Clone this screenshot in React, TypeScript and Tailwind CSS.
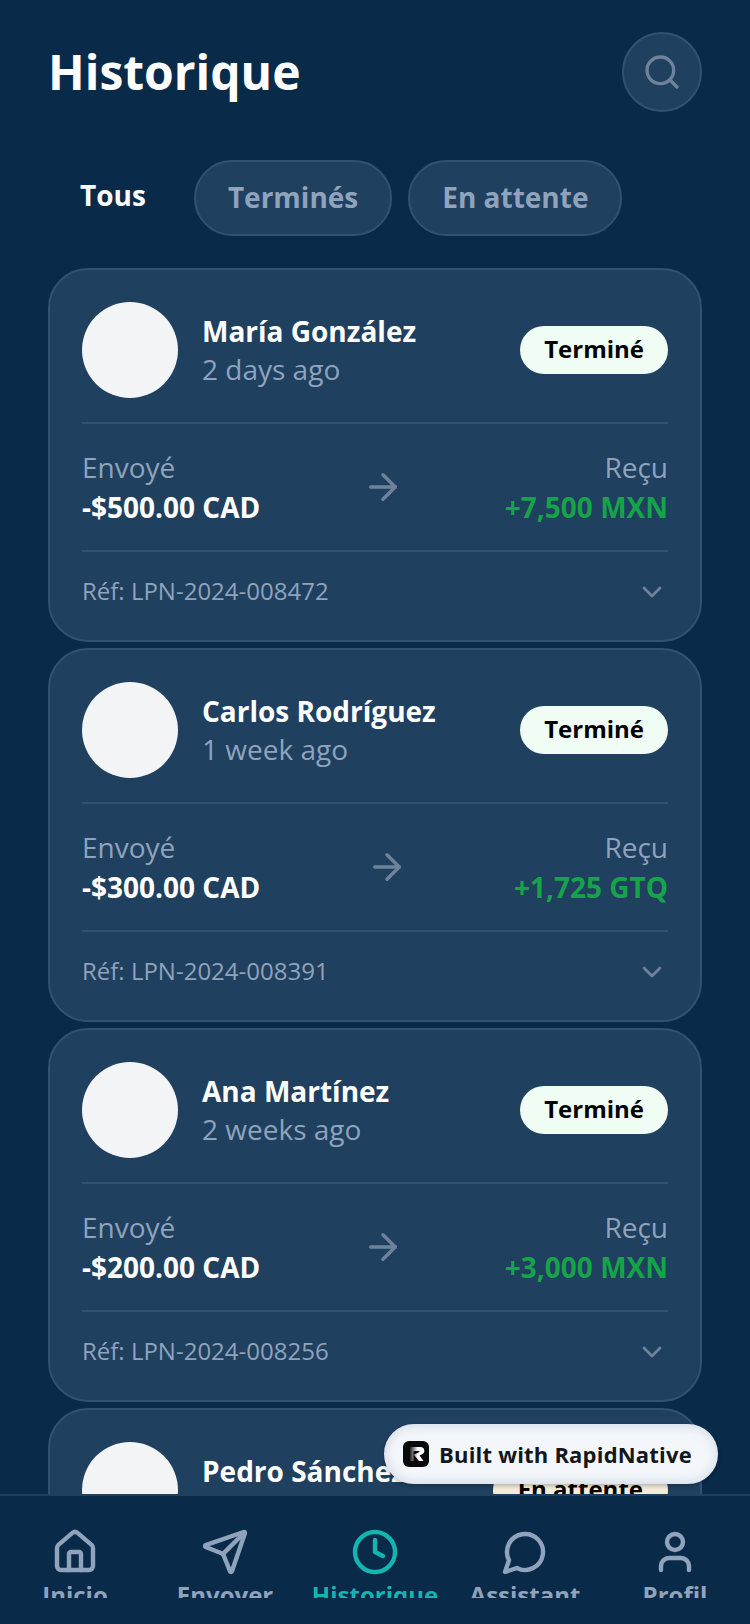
import { ArrowRight, ChevronDown, Clock, House, Search, Send, User } from 'lucide-react';

const transfers = [
  { name: 'María González', when: '2 days ago', sent: '-$500.00 CAD', got: '+7,500 MXN', ref: 'Réf: LPN-2024-008472', pending: false },
  { name: 'Carlos Rodríguez', when: '1 week ago', sent: '-$300.00 CAD', got: '+1,725 GTQ', ref: 'Réf: LPN-2024-008391', pending: false },
  { name: 'Ana Martínez', when: '2 weeks ago', sent: '-$200.00 CAD', got: '+3,000 MXN', ref: 'Réf: LPN-2024-008256', pending: false },
  { name: 'Pedro Sánchez', when: '3 weeks ago', sent: '-$150.00 CAD', got: '+2,250 MXN', ref: 'Réf: LPN-2024-008101', pending: true },
];

// lucide's current message-circle has a softer tail than the reference
const ChatIcon = ({ size, strokeWidth, className }: { size: number; strokeWidth: number; className: string }) => (
  <svg width={size} height={size} viewBox="0 0 24 24" fill="none" stroke="currentColor" strokeWidth={strokeWidth} strokeLinecap="round" strokeLinejoin="round" className={className}>
    <path d="M7.9 20A9 9 0 1 0 4 16.1L2 22Z" />
  </svg>
);

const navItems = [
  { label: 'Inicio', icon: House },
  { label: 'Envoyer', icon: Send },
  { label: 'Historique', icon: Clock, active: true },
  { label: 'Assistant', icon: ChatIcon },
  { label: 'Profil', icon: User },
];

const TransferCard = ({ item }: { item: (typeof transfers)[number] }) => (
  <div className="shrink-0 rounded-[40px] border-2 border-[#345270] bg-[#1f405f] px-8 pt-8 pb-[33px]">
    {/* Header */}
    <div className="flex items-center justify-between pb-6">
      <div className="flex items-center gap-6">
        <div className="h-24 w-24 rounded-full bg-[#f3f4f6]" />
        <div>
          <div className="text-[28px] leading-[38px] font-bold text-white">{item.name}</div>
          <div className="text-[28px] leading-[38px] text-[#8fa3bd]">{item.when}</div>
        </div>
      </div>
      <div className={`rounded-full pt-[6px] pb-[8px] text-[24px] leading-[34px] font-bold text-black ${item.pending ? 'bg-[#f3eedb] px-[25px]' : 'bg-[#f0fdf4] px-6'}`}>
        {item.pending ? 'En attente' : 'Terminé'}
      </div>
    </div>

    {/* Amounts */}
    <div className="flex items-center justify-between border-y-2 border-[#345270] py-6">
      <div>
        <div className="text-[28px] leading-[38px] text-[#8fa3bd]">Envoyé</div>
        <div className="mt-[2px] text-[28px] leading-[38px] font-bold text-white">{item.sent}</div>
      </div>
      <ArrowRight size={42} strokeWidth={2} className="text-[#6f829c]" />
      <div className="text-right">
        <div className="text-[28px] leading-[38px] text-[#8fa3bd]">Reçu</div>
        <div className="mt-[2px] text-[28px] leading-[38px] font-bold text-[#16a34a]">{item.got}</div>
      </div>
    </div>

    {/* Reference */}
    <div className="flex items-center justify-between pt-[23px]">
      <div className="text-[24px] leading-[32px] text-[#8fa3bd]">{item.ref}</div>
      <ChevronDown size={32} strokeWidth={2} className="translate-y-px text-[#6f829c]" />
    </div>
  </div>
);

export default function App() {
  return (
    <div className="relative flex h-[1624px] w-[750px] flex-col overflow-hidden bg-[#0a2a4a] font-['Open_Sans',sans-serif]">
      <div className="flex min-h-0 flex-1 flex-col overflow-hidden px-12">
        {/* Header */}
        <div className="flex items-center justify-between pt-8 pb-12">
          <h1 className="text-[48px] leading-[80px] font-bold text-white">Historique</h1>
          <div className="flex h-20 w-20 items-center justify-center rounded-full border-2 border-[#345270] bg-[#1f405f]">
            <Search size={40} strokeWidth={2} className="text-[#6f829c]" />
          </div>
        </div>

        {/* Filters */}
        <div className="flex items-center gap-4 pb-8">
          <div className="-mt-[6px] px-8 text-[28px] leading-[38px] font-bold text-white">Tous</div>
          <div className="rounded-full border-2 border-[#345270] bg-[#1f405f] px-8 pt-[15px] pb-[17px] text-[28px] leading-[40px] font-bold text-[#8fa3bd]">Terminés</div>
          <div className="rounded-full border-2 border-[#345270] bg-[#1f405f] px-8 pt-[15px] pb-[17px] text-[28px] leading-[40px] font-bold text-[#8fa3bd]">En attente</div>
        </div>

        {/* Transfers */}
        <div className="flex flex-col gap-[6px]">
          {transfers.map((item) => (
            <TransferCard key={item.ref} item={item} />
          ))}
        </div>
      </div>

      {/* Bottom nav */}
      <nav className="flex h-[130px] shrink-0 border-t-2 border-[#1f405f] bg-[#0a2a4a] pt-[32px]">
        {navItems.map(({ label, icon: Icon, active }) => (
          <div key={label} className="flex w-[150px] flex-col items-center">
            <Icon size={48} strokeWidth={2.2} className={active ? 'text-[#12b5b0]' : 'text-[#8fa3bd]'} />
            <div className={`mt-[3px] h-[19px] overflow-hidden text-[24px] leading-[32px] font-bold ${active ? 'text-[#12b5b0]' : 'text-[#8fa3bd]'}`}>{label}</div>
          </div>
        ))}
      </nav>

      {/* Built with badge */}
      <div className="absolute top-[1424px] left-[384px] flex h-[60px] w-[334px] items-center gap-[10px] rounded-full border-2 border-[#dfe6ef] bg-[#f3f6fa] pl-[17px] shadow-[inset_0_0_10px_rgba(170,188,210,0.45),0_2px_4px_rgba(0,0,0,0.25)]">
        <svg width="26" height="26" viewBox="0 0 26 26" className="shrink-0">
          <defs>
            <linearGradient id="rn-fade" x1="0" y1="0" x2="1" y2="0">
              <stop offset="0" stopColor="#222" />
              <stop offset="0.55" stopColor="#fff" />
            </linearGradient>
          </defs>
          <rect width="26" height="26" rx="6" fill="#0a0a0a" />
          <path d="M7 6h10.5a3.8 3.8 0 0 1 1.9 7.1L16.6 14.6 20.5 20h-4.6l-5-6.3 5.4-2.6a.6.6 0 0 0-.3-1.1H7zM7 10h3.5v10H7z" fill="url(#rn-fade)" />
        </svg>
        <span className="text-[22px] leading-[32px] font-bold tracking-[0.2px] text-[#14161a]">Built with RapidNative</span>
      </div>
    </div>
  );
}
